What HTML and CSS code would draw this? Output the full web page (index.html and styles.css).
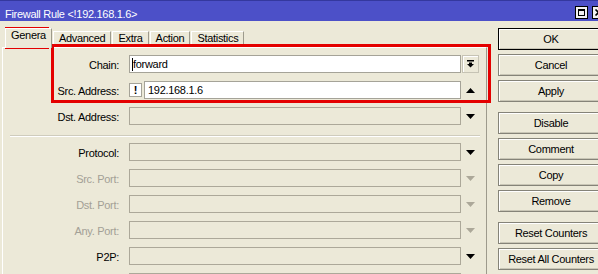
FILE: index.html
```html
<!DOCTYPE html>
<html>
<head>
<meta charset="utf-8">
<title>Firewall Rule</title>
<link rel="stylesheet" href="styles.css">
</head>
<body>
<div class="window">
  <div class="titlebar">
    <span class="title">Firewall Rule &lt;!192.168.1.6&gt;</span>
    <div class="tbtns">
      <span class="tbtn"><svg width="13" height="13" viewBox="0 0 13 13"><rect x="0.5" y="0.5" width="12" height="12" fill="#f2f2f2" stroke="#000"/><rect x="3.5" y="3.5" width="6" height="6" fill="none" stroke="#000"/><rect x="3" y="3" width="7" height="2" fill="#000"/></svg></span>
      <span class="tbtn"><svg width="13" height="13" viewBox="0 0 13 13"><rect x="0.5" y="0.5" width="12" height="12" fill="#f2f2f2" stroke="#000"/><path d="M3.5 3.5 L9.5 9.5 M9.5 3.5 L3.5 9.5" stroke="#000" stroke-width="1.6"/></svg></span>
    </div>
  </div>
  <div class="main">
    <div class="tabctl">
      <div class="tabstrip">
        <span class="tab active">Genera</span>
        <span class="tab">Advanced</span>
        <span class="tab">Extra</span>
        <span class="tab">Action</span>
        <span class="tab">Statistics</span>
      </div>
      <div class="panel">
        <div class="row">
          <span class="lbl">Chain:</span>
          <div class="field"><span class="caret"></span>forward</div>
          <span class="addon boxed"><svg width="7" height="8" viewBox="0 0 7 8"><rect x="0" y="0" width="7" height="1.5" fill="#000"/><rect x="2" y="2.5" width="3" height="1.5" fill="#000"/><polygon points="0,4 7,4 3.5,7.5" fill="#000"/></svg></span>
        </div>
        <div class="row">
          <span class="lbl">Src. Address:</span>
          <span class="neg">!</span>
          <div class="field short">192.168.1.6</div>
          <span class="addon"><svg width="9" height="5" viewBox="0 0 9 5"><polygon points="4.5,0 9,5 0,5" fill="#000"/></svg></span>
        </div>
        <div class="row">
          <span class="lbl">Dst. Address:</span>
          <div class="field off"></div>
          <span class="addon"><svg width="9" height="5" viewBox="0 0 9 5"><polygon points="0,0 9,0 4.5,5" fill="#000"/></svg></span>
        </div>
        <div class="sep"></div>
        <div class="row">
          <span class="lbl">Protocol:</span>
          <div class="field off"></div>
          <span class="addon"><svg width="9" height="5" viewBox="0 0 9 5"><polygon points="0,0 9,0 4.5,5" fill="#000"/></svg></span>
        </div>
        <div class="row">
          <span class="lbl dis">Src. Port:</span>
          <div class="field off"></div>
          <span class="addon"><svg width="9" height="5" viewBox="0 0 9 5"><polygon points="0,0 9,0 4.5,5" fill="#aca899"/></svg></span>
        </div>
        <div class="row">
          <span class="lbl dis">Dst. Port:</span>
          <div class="field off"></div>
          <span class="addon"><svg width="9" height="5" viewBox="0 0 9 5"><polygon points="0,0 9,0 4.5,5" fill="#aca899"/></svg></span>
        </div>
        <div class="row">
          <span class="lbl dis">Any. Port:</span>
          <div class="field off"></div>
          <span class="addon"><svg width="9" height="5" viewBox="0 0 9 5"><polygon points="0,0 9,0 4.5,5" fill="#aca899"/></svg></span>
        </div>
        <div class="row">
          <span class="lbl">P2P:</span>
          <div class="field off"></div>
          <span class="addon"><svg width="9" height="5" viewBox="0 0 9 5"><polygon points="0,0 9,0 4.5,5" fill="#000"/></svg></span>
        </div>
        <div class="row">
          <span class="lbl"></span>
          <div class="field off"></div>
          <span class="addon"></span>
        </div>
      </div>
    </div>
    <div class="btns">
      <div class="grp">
        <button class="btn default">OK</button>
        <button class="btn">Cancel</button>
        <button class="btn">Apply</button>
      </div>
      <div class="grp">
        <button class="btn">Disable</button>
        <button class="btn">Comment</button>
        <button class="btn">Copy</button>
        <button class="btn">Remove</button>
      </div>
      <div class="grp">
        <button class="btn">Reset Counters</button>
        <button class="btn">Reset All Counters</button>
      </div>
    </div>
  </div>
  <div class="mark mark-tab"></div>
  <div class="mark mark-fields"></div>
</div>
</body>
</html>
```
FILE: styles.css
```css
* { box-sizing: border-box; }
html, body { margin: 0; padding: 0; }
body {
  width: 598px;
  height: 274px;
  overflow: hidden;
  background: #ece9d8;
  font-family: "Liberation Sans", Arial, sans-serif;
  font-size: 11px;
  letter-spacing: -0.3px;
  color: #000;
}
.window {
  position: relative;
  width: 598px;
  height: 274px;
  overflow: hidden;
}
.titlebar {
  height: 21px;
  background: #4c50c8;
  border-top: 1px solid #34389e;
  display: flex;
  align-items: flex-start;
}
.title {
  color: #fff;
  line-height: 13px;
  padding: 7px 0 0 5px;
  white-space: nowrap;
}
.tbtns {
  margin-left: auto;
  margin-right: -7px;
  margin-top: 5px;
  display: flex;
  gap: 4px;
  flex: none;
}
.tbtn { display: block; width: 13px; height: 13px; }
.tbtn svg { display: block; }

.main { display: flex; height: 253px; }
.tabctl {
  flex: none;
  width: 487px;
  padding-left: 2px;
  display: flex;
  flex-direction: column;
}
.tabstrip {
  height: 26px;
  display: flex;
  align-items: flex-end;
  padding-left: 3px;
  gap: 1px;
  flex: none;
}
.tab {
  height: 16px;
  padding: 0 5px;
  line-height: 13px;
  border-top: 1px solid #fff;
  border-left: 1px solid #fff;
  border-right: 1px solid #9d9a8c;
  background: #ece9d8;
  white-space: nowrap;
}
.tab.active {
  height: 20px;
  margin-bottom: -1px;
  position: relative;
  z-index: 1;
}
.panel {
  flex: 1;
  border-top: 1px solid #fff;
  border-left: 1px solid #fff;
  border-right: 1px solid #9d9a8c;
  padding-top: 7px;
  display: flex;
  flex-direction: column;
  gap: 8px;
  overflow: hidden;
}
.row {
  display: flex;
  align-items: center;
  height: 18px;
  flex: none;
}
.lbl {
  flex: none;
  width: 116px;
  margin-right: 10px;
  text-align: right;
  line-height: 13px;
  padding-top: 2px;
  white-space: nowrap;
}
.lbl.dis { color: #a3a096; }
.field {
  flex: none;
  width: 332px;
  height: 18px;
  border: 1px solid #a5a398;
  background: #fff;
  padding-left: 2px;
  line-height: 17px;
  white-space: nowrap;
}
.field.short { width: 317px; padding-left: 3px; }
.field.off { background: #ece9d8; border-color: #aca899; }
.caret {
  display: inline-block;
  width: 1px;
  height: 13px;
  background: #000;
  vertical-align: -3px;
}
.neg {
  flex: none;
  width: 13px;
  height: 14px;
  margin-right: 2px;
  border: 1px solid #a5a398;
  background: #fff;
  font-weight: bold;
  text-align: center;
  line-height: 12px;
  letter-spacing: 0;
}
.addon {
  flex: none;
  width: 17px;
  height: 18px;
  margin-left: 1px;
  display: flex;
  align-items: center;
  justify-content: center;
}
.addon svg { display: block; }
.addon.boxed {
  border: 1px solid #c6c3b4;
  box-shadow: inset 1px 1px 0 #fff;
}
.sep {
  flex: none;
  width: 470px;
  height: 2px;
  margin: 2px 0 -2px 7px;
  border-top: 1px solid #cfccbd;
  border-bottom: 1px solid #fff;
}

.btns {
  flex: none;
  margin-left: 11px;
  margin-top: 7px;
  display: flex;
  flex-direction: column;
  gap: 10px;
}
.grp {
  display: flex;
  flex-direction: column;
  gap: 4px;
}
.btn {
  width: 106px;
  height: 22px;
  padding: 0;
  margin: 0;
  border: 1px solid #858378;
  background: #ece9d8;
  box-shadow: inset 1px 1px 0 #fff, inset -1px -1px 0 #c9c6b6;
  font: inherit;
  letter-spacing: inherit;
  color: #000;
  line-height: 20px;
  text-align: center;
  white-space: nowrap;
}
.btn.default { border-color: #000; }

.mark {
  position: absolute;
  border: 3px solid #e40000;
  pointer-events: none;
}
.mark-tab { left: 5px; top: 27px; width: 44px; height: 22px; }
.mark-fields { left: 51px; top: 44px; width: 440px; height: 59px; }
```
